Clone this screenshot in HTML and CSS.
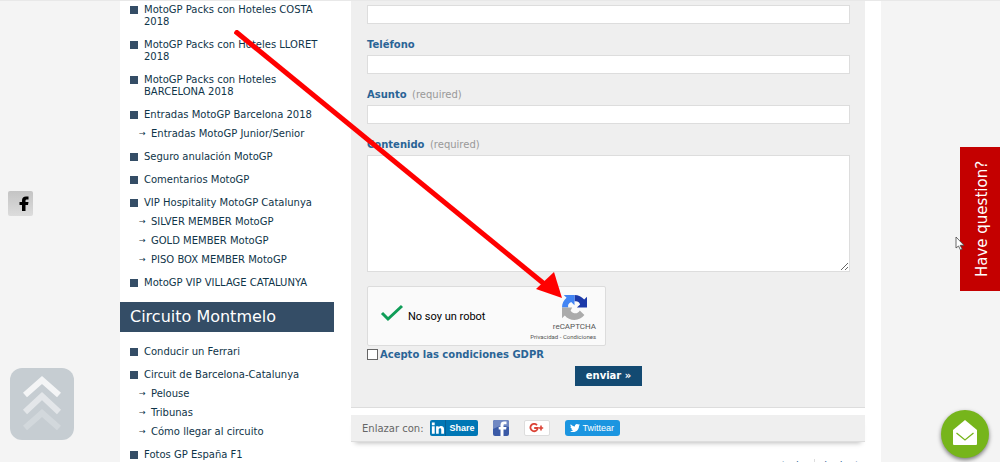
FILE: index.html
```html
<!DOCTYPE html>
<html lang="es">
<head>
<meta charset="utf-8">
<title>Contacto MotoGP</title>
<meta name="viewport" content="width=device-width, initial-scale=1">
<link rel="stylesheet" href="styles.css">
</head>
<body>
<div class="page">
  <nav class="sidebar" aria-label="Secciones">
    <ul class="menu">
      <li><a href="#">MotoGP Packs con Hoteles COSTA 2018</a></li>
      <li><a href="#">MotoGP Packs con Hoteles LLORET 2018</a></li>
      <li><a href="#">MotoGP Packs con Hoteles BARCELONA 2018</a></li>
      <li><a href="#">Entradas MotoGP Barcelona 2018</a>
        <ul class="submenu">
          <li><a href="#">Entradas MotoGP Junior/Senior</a></li>
        </ul>
      </li>
      <li><a href="#">Seguro anulación MotoGP</a></li>
      <li><a href="#">Comentarios MotoGP</a></li>
      <li><a href="#">VIP Hospitality MotoGP Catalunya</a>
        <ul class="submenu">
          <li><a href="#">SILVER MEMBER MotoGP</a></li>
          <li><a href="#">GOLD MEMBER MotoGP</a></li>
          <li><a href="#">PISO BOX MEMBER MotoGP</a></li>
        </ul>
      </li>
      <li><a href="#">MotoGP VIP VILLAGE CATALUNYA</a></li>
    </ul>
    <h2 class="menu-title">Circuito Montmelo</h2>
    <ul class="menu">
      <li><a href="#">Conducir un Ferrari</a></li>
      <li><a href="#">Circuit de Barcelona-Catalunya</a>
        <ul class="submenu">
          <li><a href="#">Pelouse</a></li>
          <li><a href="#">Tribunas</a></li>
          <li><a href="#">Cómo llegar al circuito</a></li>
        </ul>
      </li>
      <li><a href="#">Fotos GP España F1</a></li>
    </ul>
  </nav>

  <main class="content">
    <form class="contact">
      <input class="field" type="email" aria-label="Email">
      <label class="label" for="phone">Teléfono</label>
      <input class="field" type="tel" id="phone">
      <label class="label" for="subject">Asunto <span class="required">(required)</span></label>
      <input class="field" type="text" id="subject">
      <label class="label" for="body">Contenido <span class="required">(required)</span></label>
      <textarea class="field field-area" id="body"></textarea>

      <div class="captcha">
        <svg class="captcha-tick" viewBox="0 0 24 18" aria-hidden="true"><path d="M2 9 L8 15 L22 2" fill="none" stroke="#0f9d58" stroke-width="3"/></svg>
        <span class="captcha-text">No soy un robot</span>
        <div class="captcha-brand">
          <svg class="captcha-logo" viewBox="0 0 64 64" aria-hidden="true">
            <path fill="#1c3aa9" d="M64 32c0-.5 0-.9 0-1.400V4.500l-7.200 7.200C50.800 4.500 42 0 32 0v16.300c6-2 12 1 14.300 7.700L38 32z"/>
            <path fill="#4285f4" d="M31.900 0H4.500l7.200 7.200C4.500 13 0 22 0 32h16c-2-6 1-12 7.500-14.300L32 26z"/>
            <path fill="#ababab" d="M0 32v27.500l7.200-7.200C13 59.500 22 64 32 64c10.300 0 19.500-4.900 25.300-12.500L45.500 39.500c-4 8-15 11-23.500.5L26 32z"/>
          </svg>
          <span class="captcha-name">reCAPTCHA</span>
          <span class="captcha-links"><a href="#">Privacidad</a> - <a href="#">Condiciones</a></span>
        </div>
      </div>

      <div class="consent">
        <input class="consent-box" type="checkbox" id="gdpr">
        <label for="gdpr">Acepto las condiciones GDPR</label>
      </div>
      <button class="submit" type="button">enviar »</button>
    </form>

    <section class="share">
      <span>Enlazar con:</span>
      <a class="linkedin" href="#">
        <svg viewBox="0 0 16 16" aria-hidden="true"><path fill="#fff" d="M2 6h3v8H2zM2 2h3v3H2zM6.500 6h2.700v1.200C10.800 5.200 15 5.300 15 9.200V14h-3V9.800c0-2.200-2.700-2-2.700 0V14H6.500z"/></svg>
        <span>Share</span>
      </a>
      <a class="facebook" href="#" aria-label="Facebook">
        <svg viewBox="0 0 16 16" aria-hidden="true"><path fill="#7188c2" d="M0 0h16v7Q8 4 0 9z"/><path fill="#fff" d="M7.500 16V9.500H5.700V7h1.800V5.200C7.500 2.700 9 1.600 11 1.600h2.500v2.600h-1.700c-1 0-1.300.4-1.300 1.200V7h3l-.4 2.500h-2.600V16z"/></svg>
      </a>
      <a class="google" href="#" aria-label="Google+">
        <svg viewBox="0 0 16 10" aria-hidden="true"><path d="M8 2.200A3.700 3.700 0 1 0 8.800 5H5.200" fill="none" stroke="#db4437" stroke-width="1.800"/><path d="M12 2.500v5M9.800 5h4.400" stroke="#db4437" stroke-width="1.600"/></svg>
      </a>
      <a class="twitter" href="#">
        <svg viewBox="0 0 24 24" aria-hidden="true"><path fill="#fff" d="M23.950 4.570a10 10 0 0 1-2.820.780 4.960 4.960 0 0 0 2.160-2.730c-.950.560-2 .960-3.120 1.190a4.920 4.920 0 0 0-8.380 4.480C7.690 8.100 4.070 6.130 1.640 3.160a4.820 4.820 0 0 0-.670 2.480c0 1.710.870 3.210 2.190 4.100a4.900 4.900 0 0 1-2.230-.620v.060a4.920 4.920 0 0 0 3.950 4.830 5 5 0 0 1-2.210.080 4.940 4.940 0 0 0 4.600 3.420A9.870 9.870 0 0 1 0 19.540a13.990 13.990 0 0 0 7.550 2.210c9.050 0 14-7.500 14-13.980l-.02-.640a9.940 9.940 0 0 0 2.420-2.560z"/></svg>
        <span>Twittear</span>
      </a>
    </section>
    <p class="crumbs"><a href="#">anterior</a> <a class="crumb" href="#">siguiente</a></p>
  </main>
</div>

<a class="side-facebook" href="#" aria-label="Facebook">
  <svg viewBox="0 0 16 16" aria-hidden="true"><path d="M6 15V9H3.500V6H6V4.500C6 2 7.500.500 10 .500h2.500v3h-1.500c-1 0-1.500.500-1.500 1.300V6h3L12 9H9.500v6z"/></svg>
</a>
<a class="to-top" href="#" aria-label="Subir">
  <svg viewBox="0 0 64 72" aria-hidden="true">
    <g fill="none" stroke="#fff" stroke-width="6">
      <path d="M15 27 L32 12 L49 27" opacity=".8"/>
      <path d="M15 44 L32 28 L49 44" opacity=".5"/>
      <path d="M15 60 L32 45 L49 60" opacity=".22"/>
    </g>
  </svg>
</a>
<a class="question" href="#">Have question?</a>
<button class="mail" type="button" aria-label="Enviar un mensaje">
  <svg viewBox="0 0 24 26" aria-hidden="true"><path fill="#fff" d="M12 0 24 10v14q0 1-1 1H1q-1 0-1-1V10z"/><path d="M3.500 13 12 20l8.500-7" fill="none" stroke="#76b51b" stroke-width="1.300"/></svg>
</button>
<svg class="arrow" viewBox="0 0 330 270" aria-hidden="true">
  <path d="M1 1 L314 257" stroke="#f00" stroke-width="5" fill="none"/>
  <path d="M328 268 L302 259 L320 242z" fill="#f00"/>
</svg>
<svg class="cursor" viewBox="0 0 10 15" aria-hidden="true"><path d="M1 1v11l2.500-2 2 4 1.700-.8-2-3.900H9z" fill="#fff" stroke="#444" stroke-width=".8"/></svg>
</body>
</html>
```
FILE: styles.css
```css
* { box-sizing: border-box; }
body {
  margin: 0;
  height: 100vh;
  overflow: hidden;
  position: relative;
  background: #f4f4f4;
  border-top: 1px solid #e8e8e8;
  font-family: "DejaVu Sans", sans-serif;
  font-size: 10px;
  color: #666;
}
a { color: inherit; text-decoration: none; }
svg { display: block; }
.page {
  display: grid;
  grid-template-columns: 214px 1fr;
  gap: 17px;
  margin: 0 119px 0 120px;
  padding-right: 16px;
  background: #fff;
}
.menu, .submenu { list-style: none; margin: 0; padding: 0; }
.menu {
  display: flex;
  flex-direction: column;
  gap: 11px;
  padding: 3px 10px 13px;
  color: #0f3549;
  font-size: 10px;
  line-height: 12px;
}
.menu > li { padding-left: 14px; position: relative; }
.menu > li::before {
  content: "";
  position: absolute;
  left: 0;
  top: 2px;
  width: 8px;
  height: 8px;
  background: #344d66;
}
.submenu > li { margin-top: 7px; padding-left: 7px; position: relative; }
.submenu > li::before {
  content: "→";
  position: absolute;
  left: -5px;
  font-size: 8px;
}
.menu-title {
  margin: 0;
  padding: 0 10px;
  background: #344d66;
  color: #fff;
  font-size: 16px;
  font-weight: 400;
  line-height: 30px;
}
.menu-title + .menu { padding-top: 14px; }

.contact {
  display: flex;
  flex-direction: column;
  padding: 4px 15px 21px 16px;
  background: #efefef;
  border-bottom: 1px solid #ddd;
}
.field {
  width: 100%;
  height: 19px;
  margin: 0;
  padding: 2px;
  border: 1px solid #ddd;
  background: #fff;
  font: inherit;
}
.label {
  height: 31px;
  padding-top: 15px;
  color: #2a6496;
  font-weight: 700;
  line-height: 12px;
}
.required { margin-left: 2px; color: #999; font-weight: 400; }
.field-area { display: block; height: 117px; resize: vertical; }
.captcha {
  display: flex;
  align-items: center;
  width: 239px;
  height: 60px;
  margin-top: 14px;
  padding: 0 9px 0 12px;
  background: #fafafa;
  border: 1px solid #dcdcdc;
  border-radius: 2px;
  font-family: Roboto, sans-serif;
}
.captcha-tick { width: 24px; height: 18px; margin-bottom: 6px; }
.captcha-text { margin-left: 4px; color: #000; font-size: 11px; }
.captcha-brand {
  display: flex;
  flex-direction: column;
  align-items: flex-end;
  margin-left: auto;
  padding-top: 2px;
  color: #555;
}
.captcha-logo { width: 25px; height: 25px; margin-right: 9px; }
.captcha-name { font-size: 8px; line-height: 14px; }
.captcha-links { font-size: 6px; line-height: 6px; }
.consent {
  display: flex;
  align-items: center;
  gap: 2px;
  height: 16px;
  color: #2a6496;
  font-weight: 700;
}
.consent-box {
  appearance: none;
  width: 11px;
  height: 11px;
  margin: 0;
  background: #fff;
  border: 1px solid #666;
}
.submit {
  align-self: center;
  height: 20px;
  margin-top: 4px;
  padding: 0 11px;
  border: 0;
  background: #134a72;
  color: #fff;
  font: 700 10px/20px "DejaVu Sans", sans-serif;
}
.share {
  display: flex;
  align-items: center;
  height: 27px;
  margin-top: 7px;
  padding: 0 11px;
  background: #efefef;
  border-bottom: 1px solid #ddd;
  box-shadow: 0 5px 5px -4px #bbb;
}
.linkedin, .twitter {
  display: flex;
  align-items: center;
  height: 16px;
  border-radius: 2px;
  color: #fff;
  font-family: "Liberation Sans", sans-serif;
  font-size: 9px;
}
.linkedin { width: 48px; margin-left: 6px; background: #0077b5; font-weight: 700; }
.linkedin svg { width: 16px; height: 16px; border-right: 1px solid #066094; }
.linkedin span { margin-left: 4px; }
.facebook { width: 16px; height: 16px; margin-left: 15px; border-radius: 2px; background: #3b5aa6; overflow: hidden; }
.google {
  display: grid;
  place-items: center;
  width: 26px;
  height: 16px;
  margin-left: 15px;
  background: #fff;
  border: 1px solid #ddd;
  border-radius: 2px;
}
.google svg { width: 16px; height: 10px; }
.twitter { width: 55px; margin-left: 15px; padding-left: 5px; gap: 3px; background: #1b95e0; border-radius: 3px; }
.twitter svg { width: 10px; height: 10px; }
.crumbs {
  display: flex;
  justify-content: flex-end;
  gap: 5px;
  height: 4px;
  margin: 17px 0 0;
  color: #2a6496;
  line-height: 14px;
}
.crumb { height: 14px; padding-left: 4px; border-left: 1px solid #ddd; }

.side-facebook {
  position: absolute;
  left: 8px;
  top: 190px;
  width: 25px;
  height: 25px;
  padding: 5px 0 0 8px;
  border-radius: 2px;
  background: linear-gradient(#c4c4c4, #dcdcdc);
}
.side-facebook svg { width: 16px; height: 16px; }
.to-top {
  position: absolute;
  left: 10px;
  top: 367px;
  width: 64px;
  height: 72px;
  border-radius: 12px;
  background: #c6cdd2;
}
.question {
  position: absolute;
  right: 0;
  top: 146px;
  display: flex;
  align-items: center;
  justify-content: center;
  width: 40px;
  height: 144px;
  padding-right: 4px;
  writing-mode: vertical-rl;
  rotate: 180deg;
  background: #c40000;
  color: #fff;
  font-size: 15px;
}
.mail {
  position: absolute;
  right: 11px;
  top: 409px;
  display: grid;
  place-items: center;
  width: 48px;
  height: 48px;
  padding: 0 0 2px;
  border: 0;
  border-radius: 50%;
  background: #76b51b;
  box-shadow: 0 2px 4px #777;
}
.mail svg { width: 24px; height: 26px; }
.arrow { position: absolute; left: 234px; top: 29px; width: 330px; height: 270px; pointer-events: none; }
.cursor { position: absolute; right: 35px; top: 235px; width: 10px; height: 15px; }
```
